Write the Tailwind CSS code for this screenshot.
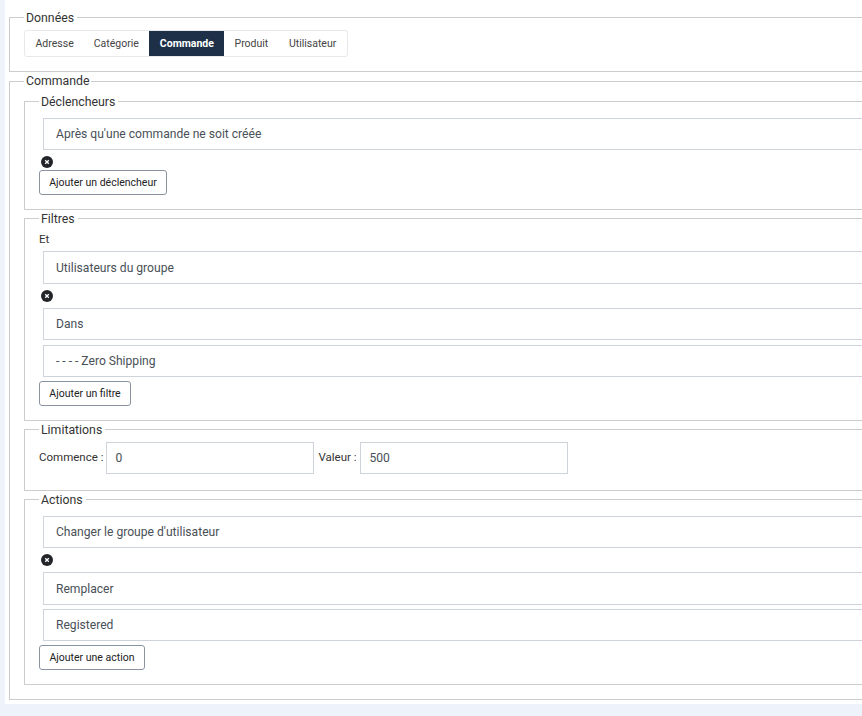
<!DOCTYPE html>
<html lang="fr">
<head>
    <meta charset="UTF-8">
    <meta name="viewport" content="width=device-width, initial-scale=1.0">
    <title>Commande</title>
    <script src="https://cdn.jsdelivr.net/npm/@tailwindcss/browser@4"></script>
</head>
<body class="bg-[#eef3fb] h-[716px] overflow-hidden font-['Roboto',sans-serif] text-[#333]">

    <div class="ml-[5px] h-[704px] bg-white pl-1 pt-2 overflow-hidden">

        <fieldset class="w-[900px] h-[64px] border border-[#ccc] pl-[14px]">
            <legend class="pl-[2px] pr-[3px] pt-[2px] text-[12.3px] leading-[16px]">Données</legend>
            <div class="mt-[4px] inline-flex h-[27px] items-stretch border border-[#e8e8e8] rounded-[3px] text-[10.5px] text-[#444]">
                <a class="flex items-center pl-[10.5px] pr-[10px]">Adresse</a>
                <a class="flex items-center pl-[10px] pr-[10px]">Catégorie</a>
                <a class="flex items-center pl-[11px] pr-[10.3px] bg-[#1e3048] text-white font-bold">Commande</a>
                <a class="flex items-center px-[10.3px]">Produit</a>
                <a class="flex items-center px-[10.3px]">Utilisateur</a>
            </div>
        </fieldset>

        <fieldset class="w-[900px] h-[628px] border border-[#ccc] pl-[14px]">
            <legend class="pl-[2px] pr-[1px] pt-[1px] pb-[1px] text-[12.3px] leading-[16px]">Commande</legend>

            <fieldset class="mt-[2px] h-[118px] border border-[#ccc] pl-[14px]">
                <legend class="pl-[2px] pr-[3px] pt-[2px] text-[12.3px] leading-[16px]">Déclencheurs</legend>
                <div class="mt-[8px] ml-[4px] h-[32px] flex items-center border border-[#ced4da] pl-[12px] text-[12.1px] text-[#495057]">Après qu'une commande ne soit créée</div>
                <div class="mt-[6px] ml-[2px] w-[12px] h-[12px] rounded-full bg-[#212529] flex items-center justify-center">
                    <svg class="w-[6px] h-[6px]" viewBox="0 0 6 6"><path d="M1.2 1.2 4.8 4.8M4.8 1.2 1.2 4.8" stroke="#fff" stroke-width="1.3" /></svg>
                </div>
                <button class="block mt-[2px] h-[25px] w-[128px] border border-[#8a949e] rounded-[3px] text-[10.5px] text-[#222]">Ajouter un déclencheur</button>
            </fieldset>

            <fieldset class="-mt-px h-[212px] border border-[#ccc] pl-[14px]">
                <legend class="pl-[2px] pr-[3px] pt-[2px] text-[12.3px] leading-[16px]">Filtres</legend>
                <div class="mt-[4px] text-[11.5px] leading-[16px]">Et</div>
                <div class="mt-[4px] ml-[4px] h-[33px] pt-px flex items-center border border-[#ced4da] pl-[12px] text-[12.1px] text-[#495057]">Utilisateurs du groupe</div>
                <div class="mt-[6px] ml-[2px] w-[12px] h-[12px] rounded-full bg-[#212529] flex items-center justify-center">
                    <svg class="w-[6px] h-[6px]" viewBox="0 0 6 6"><path d="M1.2 1.2 4.8 4.8M4.8 1.2 1.2 4.8" stroke="#fff" stroke-width="1.3" /></svg>
                </div>
                <div class="mt-[6px] ml-[4px] h-[32px] pt-px flex items-center border border-[#ced4da] pl-[12px] text-[12.1px] text-[#495057]">Dans</div>
                <div class="mt-[5px] ml-[4px] h-[32px] flex items-center border border-[#ced4da] pl-[12px] text-[12.1px] text-[#495057]">- - - - Zero Shipping</div>
                <button class="block mt-[4px] h-[25px] w-[92px] border border-[#8a949e] rounded-[3px] text-[10.5px] text-[#222]">Ajouter un filtre</button>
            </fieldset>

            <fieldset class="-mt-px h-[71px] border border-[#ccc] pl-[14px]">
                <legend class="pl-[2px] pr-[3px] pt-[2px] text-[12.3px] leading-[16px]">Limitations</legend>
                <div class="mt-[4px] flex items-center text-[11.5px]">
                    <span>Commence :</span>
                    <input class="ml-[3px] w-[208px] h-[32px] border border-[#ced4da] pl-[8px] text-[12.1px] text-[#495057]" value="0">
                    <span class="ml-[4px]">Valeur :</span>
                    <input class="ml-[3px] w-[208px] h-[32px] border border-[#ced4da] pl-[9px] text-[12.1px] text-[#495057]" value="500">
                </div>
            </fieldset>

            <fieldset class="-mt-px h-[195px] border border-[#ccc] pl-[14px]">
                <legend class="pl-[2px] pr-[3px] pt-[2px] text-[12.3px] leading-[16px]">Actions</legend>
                <div class="mt-[8px] ml-[4px] h-[32px] flex items-center border border-[#ced4da] pl-[12px] text-[12.1px] text-[#495057]">Changer le groupe d'utilisateur</div>
                <div class="mt-[6px] ml-[2px] w-[12px] h-[12px] rounded-full bg-[#212529] flex items-center justify-center">
                    <svg class="w-[6px] h-[6px]" viewBox="0 0 6 6"><path d="M1.2 1.2 4.8 4.8M4.8 1.2 1.2 4.8" stroke="#fff" stroke-width="1.3" /></svg>
                </div>
                <div class="mt-[6px] ml-[4px] h-[33px] pt-px flex items-center border border-[#ced4da] pl-[12px] text-[12.1px] text-[#495057]">Remplacer</div>
                <div class="mt-[4px] ml-[4px] h-[32px] flex items-center border border-[#ced4da] pl-[12px] text-[12.1px] text-[#495057]">Registered</div>
                <button class="block mt-[4px] h-[25px] w-[106px] border border-[#8a949e] rounded-[3px] text-[10.5px] text-[#222]">Ajouter une action</button>
            </fieldset>
        </fieldset>
    </div>

</body>
</html>
